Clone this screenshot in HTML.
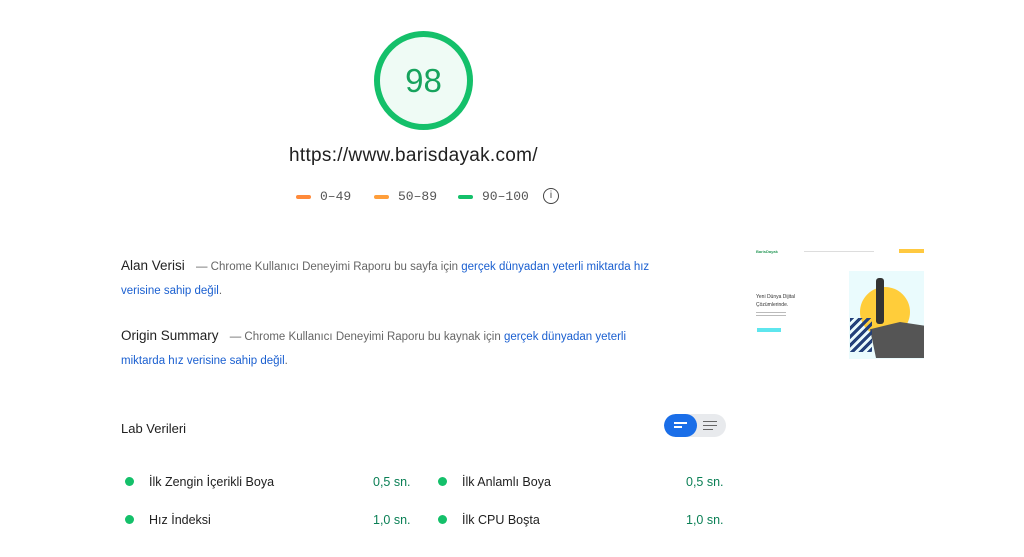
<!DOCTYPE html>
<html><head><meta charset="utf-8"><style>
*{margin:0;padding:0;box-sizing:border-box}
body{width:1024px;height:557px;background:#fff;font-family:"Liberation Sans",sans-serif;position:relative;overflow:hidden;color:#212121}
.abs{position:absolute}
.ring{left:374px;top:31px;width:99px;height:99px;border-radius:50%;border:6px solid #14c06a;background:#effbf5;text-align:center;line-height:87px;font-size:33px;color:#17a35d}
.url{left:289px;top:145px;font-size:19px;color:#212121;letter-spacing:0.3px}
.leg{top:189px;font-family:"Liberation Mono",monospace;font-size:13px;color:#555}
.bar{display:inline-block;width:15px;height:4px;border-radius:2px;vertical-align:middle;margin-right:9px}
.t{font-size:11.5px;color:#666;line-height:24px}
.t b{font-weight:normal;font-size:13.5px;color:#212121;margin-right:8px}
.t a{color:#1a5fd0;text-decoration:none}
.m{font-size:12.5px;color:#212121}
.m i{display:inline-block;width:9px;height:9px;border-radius:50%;background:#14c06a;margin-right:15px;vertical-align:middle;position:relative;top:-1px}
.v{font-size:12.5px;color:#0a7f55}
</style></head><body>
<div class="abs ring">98</div>
<div class="abs url">https://www.barisdayak.com/</div>
<div class="abs leg" style="left:296px"><span class="bar" style="background:#ff8a3a"></span>0–49</div>
<div class="abs leg" style="left:374px"><span class="bar" style="background:#ff9e3a"></span>50–89</div>
<div class="abs leg" style="left:458px"><span class="bar" style="background:#14c06a"></span>90–100</div>
<div class="abs" style="left:543px;top:188px;width:16px;height:16px;border:1.5px solid #444;border-radius:50%;font-size:10px;text-align:center;line-height:13px;color:#444">i</div>

<div class="abs t" style="left:121px;top:254px;width:560px"><b>Alan Verisi</b> — Chrome Kullanıcı Deneyimi Raporu bu sayfa için <a>gerçek dünyadan yeterli miktarda hız verisine sahip değil</a>.</div>
<div class="abs t" style="left:121px;top:324px;width:530px"><b>Origin Summary</b> — Chrome Kullanıcı Deneyimi Raporu bu kaynak için <a>gerçek dünyadan yeterli miktarda hız verisine sahip değil</a>.</div>

<div class="abs" style="left:121px;top:421px;font-size:13px">Lab Verileri</div>
<div class="abs" style="left:664px;top:414px;width:62px;height:23px;border-radius:12px;background:#e8eaed;overflow:hidden">
 <div style="width:33px;height:23px;background:#1a6ee8;border-radius:12px;position:relative">
  <div style="position:absolute;left:10px;top:8px;width:13px;height:2px;background:#fff"></div>
  <div style="position:absolute;left:10px;top:12px;width:8px;height:2px;background:#fff"></div>
 </div>
 <div style="position:absolute;left:39px;top:7px;width:14px;height:1px;background:#666"></div>
 <div style="position:absolute;left:39px;top:11px;width:14px;height:1px;background:#666"></div>
 <div style="position:absolute;left:39px;top:15px;width:10px;height:1px;background:#666"></div>
</div>

<div class="abs m" style="left:125px;top:475px"><i></i>İlk Zengin İçerikli Boya</div>
<div class="abs v" style="left:373px;top:475px">0,5 sn.</div>
<div class="abs m" style="left:438px;top:475px"><i></i>İlk Anlamlı Boya</div>
<div class="abs v" style="left:686px;top:475px">0,5 sn.</div>
<div class="abs m" style="left:125px;top:513px"><i></i>Hız İndeksi</div>
<div class="abs v" style="left:373px;top:513px">1,0 sn.</div>
<div class="abs m" style="left:438px;top:513px"><i></i>İlk CPU Boşta</div>
<div class="abs v" style="left:686px;top:513px">1,0 sn.</div>

<div class="abs" style="left:754px;top:246px;width:172px;height:112px;background:#fff">
 <div class="abs" style="left:2px;top:3px;font-size:4px;color:#2a9a5a;font-weight:bold">BarisDayak</div>
 <div class="abs" style="left:50px;top:5px;width:70px;height:1px;background:#ddd"></div>
 <div class="abs" style="left:145px;top:3px;width:25px;height:4px;background:#ffc940"></div>
 <div class="abs" style="left:95px;top:25px;width:75px;height:88px;background:#eafbfd"></div>
 <div class="abs" style="left:106px;top:41px;width:50px;height:50px;border-radius:50%;background:#ffcd3a"></div>
 <div class="abs" style="left:122px;top:32px;width:8px;height:46px;background:#333;border-radius:3px"></div>
 <div class="abs" style="left:110px;top:76px;width:60px;height:36px;background:#555;clip-path:polygon(10% 20%,60% 0,100% 10%,100% 100%,20% 100%)"></div>
 <div class="abs" style="left:96px;top:72px;width:22px;height:34px;background:repeating-linear-gradient(135deg,#23407a 0 3px,transparent 3px 6px)"></div>
 <div class="abs" style="left:2px;top:47px;font-size:5px;color:#333;line-height:8px">Yeni Dünya Dijital<br>Çözümlerinde.</div>
 <div class="abs" style="left:2px;top:66px;width:30px;height:1px;background:#bbb"></div>
 <div class="abs" style="left:2px;top:69px;width:30px;height:1px;background:#bbb"></div>
 <div class="abs" style="left:3px;top:82px;width:24px;height:4px;background:#5ee6ee"></div>
</div>
</body></html>
